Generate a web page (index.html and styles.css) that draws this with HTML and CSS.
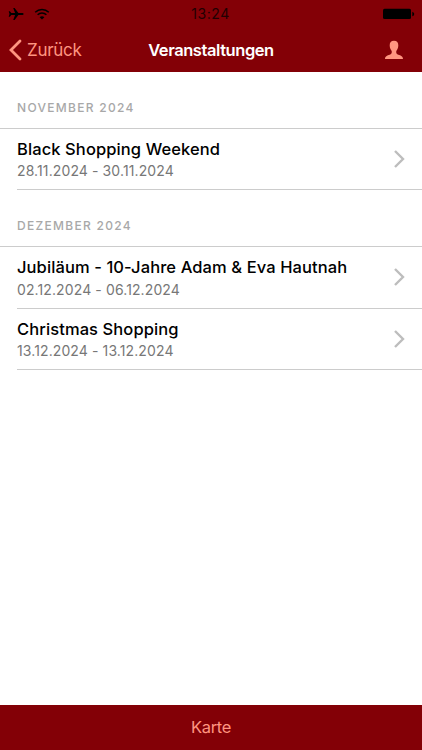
FILE: index.html
```html
<!DOCTYPE html>
<html lang="de">
<head>
<meta charset="utf-8">
<title>Veranstaltungen</title>
<link rel="stylesheet" href="styles.css">
</head>
<body>
<div class="app">
  <header class="header">
    <div class="status">
      <div class="signals">
        <svg width="16" height="14" viewBox="0 0 16 14"><path d="M15.600 7c0 .6-.7 1-1.600 1h-3.600L6.600 13H5.200l1.900-5H3.300L1.800 9.800H.7L1.500 7 .7 4.200h1.100L3.300 6h3.800L5.200 1h1.400l3.800 5H14c.9 0 1.600.4 1.600 1z"/></svg>
        <svg width="16" height="12" viewBox="0 0 16 12" class="wifi"><path d="M1.200 4.200C5 .5 11 .5 14.800 4.200M3.600 6.800c2.500-2.500 6.300-2.500 8.800 0"/><path class="dot" d="M5.600 9.200c1.400-1.300 3.400-1.300 4.800 0L8 11.600z"/></svg>
      </div>
      <time class="clock">13:24</time>
      <svg class="battery" width="34" height="12" viewBox="0 0 34 12"><rect x="1" y=".7" width="28" height="10.300" rx="1.500"/><path d="M30.300 3.700c2.500.8 2.500 3.800 0 4.600z"/></svg>
    </div>
    <nav class="nav">
      <a class="back">
        <svg width="13" height="22" viewBox="0 0 13 22"><path d="M11 2 2 11l9 9"/></svg>
        <span>Zurück</span>
      </a>
      <h1>Veranstaltungen</h1>
      <svg class="user" width="20" height="20" viewBox="0 0 20 20"><path d="M10 .7c3 0 4.400 1.800 4.300 4.800-.1 2.300-.8 4.200-2 5.400-.3 2 .2 3.100 1.500 3.600 3.500 1.200 5 1.800 5.200 4.500H1c.2-2.700 1.700-3.300 5.200-4.500 1.300-.5 1.800-1.600 1.500-3.600-1.200-1.200-1.900-3.100-2-5.400C5.600 2.500 7 .7 10 .7z"/></svg>
    </nav>
  </header>
  <main class="content">
    <section>
      <h2>NOVEMBER 2024</h2>
      <ul>
        <li><div><h3>Black Shopping Weekend</h3><p>28.11.2024 - 30.11.2024</p></div><svg class="chevron" width="12" height="20" viewBox="0 0 12 20"><path d="m2 2 8 8-8 8"/></svg></li>
      </ul>
    </section>
    <section>
      <h2>DEZEMBER 2024</h2>
      <ul>
        <li class="tall"><div><h3>Jubiläum - 10-Jahre Adam &amp; Eva Hautnah</h3><p>02.12.2024 - 06.12.2024</p></div><svg class="chevron" width="12" height="20" viewBox="0 0 12 20"><path d="m2 2 8 8-8 8"/></svg></li>
        <li><div><h3>Christmas Shopping</h3><p>13.12.2024 - 13.12.2024</p></div><svg class="chevron" width="12" height="20" viewBox="0 0 12 20"><path d="m2 2 8 8-8 8"/></svg></li>
      </ul>
    </section>
  </main>
  <footer class="footer">Karte</footer>
</div>
</body>
</html>
```
FILE: styles.css
```css
* { box-sizing: border-box; }
body, h1, h2, h3, p, ul { margin: 0; padding: 0; }
body { font-family: Inter, "Liberation Sans", sans-serif; background: #fff; }
svg { display: block; flex: none; }
.app { height: 750px; display: flex; flex-direction: column; overflow: hidden; }
.header { height: 72px; background: #830006; flex: none; }
.status { height: 27px; display: grid; grid-template-columns: 1fr auto 1fr; align-items: center; padding: 0 6px 0 8px; }
.signals { display: flex; align-items: center; gap: 10px; }
.wifi { fill: none; stroke: #000; stroke-width: 1.5; }
.wifi .dot { fill: #000; stroke: none; }
.clock { font-size: 14px; letter-spacing: .6px; color: #210002; margin-right: 3px; }
.battery { justify-self: end; }
.nav { height: 45px; display: grid; grid-template-columns: 1fr auto 1fr; align-items: center; padding: 0 9px; }
.back { display: flex; align-items: center; gap: 5px; color: #ff9580; font-size: 17px; letter-spacing: -.3px; padding-top: 1px; }
.back svg { fill: none; stroke: #ff9580; stroke-width: 2.8; stroke-linecap: round; }
h1 { font-size: 16.5px; font-weight: 600; letter-spacing: -.43px; color: #fff; padding-top: 1px; }
.user { justify-self: end; margin-right: 9px; fill: #ff9580; }
.content { flex: 1; }
h2 { height: 57px; padding: 28px 17px 0; border-bottom: 1px solid #ccc; font-size: 12px; line-height: 15px; font-weight: 500; letter-spacing: 1.3px; color: #a8a8a8; }
ul { list-style: none; }
li { height: 61px; margin-left: 17px; padding: 0 17px 0 0; border-bottom: 1px solid #ccc; display: flex; align-items: flex-start; justify-content: space-between; }
li > div { padding-top: 9.5px; }
li.tall { height: 62px; }
li.tall p { padding-top: 1px; }
h3 { font-size: 16.5px; line-height: 21px; font-weight: 500; letter-spacing: .1px; color: #000; }
p { font-size: 14px; line-height: 22px; letter-spacing: .11px; color: #777; }
.chevron { margin-top: 20px; fill: none; stroke: #bdbdbd; stroke-width: 2.4; }
.footer { height: 45px; flex: none; padding-bottom: 1px; background: #830006; color: #ff9580; font-size: 16.5px; letter-spacing: -.3px; display: flex; align-items: center; justify-content: center; }
```
